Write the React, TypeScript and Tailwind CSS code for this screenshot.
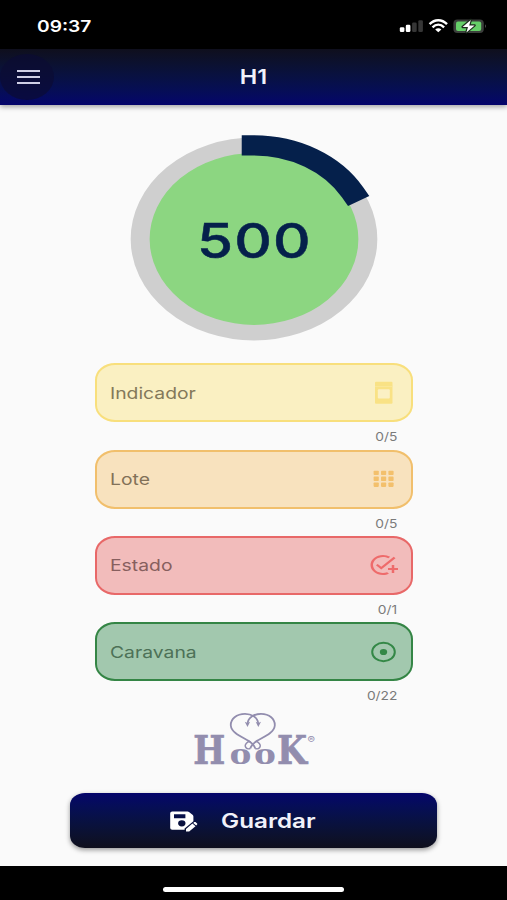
import type { ReactNode } from "react";
import { MdAddTask } from "react-icons/md";

const CardIcon = () => (
  <svg width="28" height="24" viewBox="0 0 28 24">
    <rect x="5" y="0.7" width="17.5" height="22" rx="1" fill="#f9e285" />
    <path d="M5 5.4h17.5" stroke="#fbe99f" strokeWidth="0.8" />
    <rect x="7.8" y="8.3" width="12" height="9.3" rx="1" fill="#fbf0c4" />
  </svg>
);

const GridIcon = () => (
  <svg width="28" height="24" viewBox="0 0 28 24" fill="#f3c06c">
    {[3.6, 11, 18.4].map(x =>
      [3.7, 9.6, 15.5].map(y => <rect key={`${x}-${y}`} x={x} y={y} width="5.2" height="4.4" rx="0.8" />)
    )}
  </svg>
);

const TaskIcon = () => <MdAddTask preserveAspectRatio="none" className="w-[30px] h-[24px] shrink-0 -ml-[1.5px] text-[#ee6b6b]" />;

const TargetIcon = () => (
  <svg width="28" height="24" viewBox="0 0 28 24">
    <ellipse cx="13.5" cy="12" rx="11.3" ry="9.2" fill="none" stroke="#348847" strokeWidth="2" />
    <ellipse cx="13.5" cy="12" rx="3.7" ry="3.1" fill="#348847" />
  </svg>
);

const SaveIcon = () => (
  <svg width="29" height="24" viewBox="0 0 29 24">
    <path fillRule="evenodd" fill="#fff" d="M3.2 2.4H18.6Q19.4 2.4 20 2.9L23.8 6.1Q24.4 6.7 24.4 7.5V12.2L15.6 19.4V20.7H3.2Q1.2 20.7 1.2 18.9V4.2Q1.2 2.4 3.2 2.4ZM5 5.2V9.2H16.4V5.2ZM12.8 11.2A3.7 3.1 0 1 0 12.8 17.4A3.7 3.1 0 1 0 12.8 11.2Z" />
    <path d="M17 22.6V19.9L23.4 14.6L26.5 17.2L20.2 22.6ZM24.2 14L25.3 13.1Q25.9 12.7 26.5 13.1L28.1 14.4Q28.6 14.9 28.1 15.5L27.2 16.4Z" fill="#fff" />
  </svg>
);

const FIELDS: { label: string; count: string; box: string; text: string; icon: ReactNode }[] = [
  { label: "Indicador", count: "0/5", box: "border-[#f8df7c] bg-[#faf0c2]", text: "text-[#83795a]", icon: <CardIcon /> },
  { label: "Lote", count: "0/5", box: "border-[#f1bf6c] bg-[#f8e2be]", text: "text-[#827158]", icon: <GridIcon /> },
  { label: "Estado", count: "0/1", box: "border-[#e86868] bg-[#f2bcbb]", text: "text-[#875f5e]", icon: <TaskIcon /> },
  { label: "Caravana", count: "0/22", box: "border-[#348545] bg-[#a2c8ae]", text: "text-[#4d7157]", icon: <TargetIcon /> },
];

function StatusBar() {
  return (
    <div className="h-[49px] bg-black flex items-start justify-between pl-[37px] pr-[21px] pt-[14px]">
      <span className="text-[16px] leading-6 font-semibold text-white origin-left scale-x-[1.2]">09:37</span>
      <svg width="88" height="24" viewBox="0 0 88 24">
        <rect x="1.8" y="13.2" width="4.6" height="4.8" rx="1.3" fill="#fff" />
        <rect x="7.8" y="10.8" width="4.6" height="7.2" rx="1.3" fill="#fff" />
        <rect x="14.1" y="8.4" width="4.6" height="9.6" rx="1.3" fill="#363636" />
        <rect x="20.3" y="6.2" width="4.6" height="11.8" rx="1.3" fill="#363636" />
        <g fill="none" stroke="#fff" strokeWidth="2.4">
          <path d="M31.6 10.2C36.7 4.9 43.9 4.9 49 10.2" />
          <path d="M34.5 13.3C38 9.9 42.6 9.9 46.1 13.3" />
        </g>
        <path d="M37.2 15.4C39 13.8 41.6 13.8 43.4 15.4L40.3 18.2Z" fill="#fff" />
        <rect x="55.4" y="5.4" width="30.4" height="13.6" rx="4" fill="#3c3f3c" />
        <rect x="58" y="7.4" width="25.2" height="9.6" rx="2" fill="#65cf68" />
        <path d="M87 10.2q1.8 1.9 0 3.8z" fill="#555" />
        <path d="M72.8 6L64.6 13h5.4l-1.6 5.4 8.2-7h-5.4z" fill="#fff" stroke="#1c2b1c" strokeWidth="2.4" strokeLinejoin="round" paintOrder="stroke" />
      </svg>
    </div>
  );
}

function Header() {
  return (
    <header className="h-[56px] grid grid-cols-[56px_1fr_56px] items-center bg-linear-to-b from-[#0f0f1d] to-[#05046b] shadow-[0_2px_5px_rgba(0,0,0,0.35)]">
      <button className="w-[54px] h-[46px] rounded-[50%] bg-[#0c0c33]/70 flex flex-col items-center justify-center gap-[4.3px] pl-[2px]">
        <i className="block w-[23px] h-[2px] bg-[#cfcfe6]" />
        <i className="block w-[23px] h-[2px] bg-[#cfcfe6]" />
        <i className="block w-[23px] h-[2px] bg-[#cfcfe6]" />
      </button>
      <h1 className="pt-[2px] text-center text-[19.5px] font-semibold text-[#f1f1fa] scale-x-[1.2]">H1</h1>
    </header>
  );
}

function Gauge() {
  return (
    <svg width="260" height="216" viewBox="-130 -108 260 216" className="mt-[26px] shrink-0">
      <g transform="scale(1.215 1)">
        <circle r="93.7" fill="#8cd681" stroke="#cfcfcf" strokeWidth="15.6" />
        <path d="M0 -93.7A93.7 93.7 0 0 1 81.1 -46.8" fill="none" stroke="#05204b" strokeWidth="20.2" strokeLinecap="square" />
        <text x="0.4" y="18.5" textAnchor="middle" fontSize="48" fontWeight="500" letterSpacing="1" fill="#05204b" stroke="#05204b" strokeWidth="0.5">500</text>
      </g>
    </svg>
  );
}

function Field({ label, count, box, text, icon }: (typeof FIELDS)[number]) {
  return (
    <div className="w-[318px] h-[86.3px] shrink-0">
      <div className={`h-[59px] rounded-[20px/17px] border-2 flex items-center justify-between pl-[13px] pr-[13px] ${box}`}>
        <span className={`text-[16.1px] origin-left scale-x-[1.2] ${text}`}>{label}</span>
        <span className="w-[28px] flex">{icon}</span>
      </div>
      <div className="pr-[15px] mt-[7px] flex justify-end text-[11.5px] leading-4 text-[#7a7a7a]">
        <span className="origin-right scale-x-[1.2]">{count}</span>
      </div>
    </div>
  );
}

function Logo() {
  return (
    <svg width="130" height="64" viewBox="-3 0 130 64" fill="#928dae" className="mt-[3px] shrink-0">
      <g fontWeight="700">
        <g fontFamily="DejaVu Serif, serif" fontSize="38.5" stroke="#928dae" strokeWidth="0.7">
          <text x="1.2" y="51.5" textLength="32" lengthAdjust="spacingAndGlyphs">H</text>
          <text x="85" y="51.5" textLength="30" lengthAdjust="spacingAndGlyphs">K</text>
        </g>
        <g fontFamily="Liberation Serif, serif" fontSize="31">
          <text x="37.3" y="51.8" textLength="22.5" lengthAdjust="spacingAndGlyphs">o</text>
          <text x="61.8" y="51.8" textLength="22.5" lengthAdjust="spacingAndGlyphs">o</text>
        </g>
      </g>
      <text x="115.5" y="31" fontSize="9" textLength="7.5" lengthAdjust="spacingAndGlyphs">®</text>
      <g fill="none" stroke="#928dae" strokeWidth="1.8">
        <path d="M66.3 12C66 5 59 1.8 53 1.8C44.5 1.8 38.5 7 38.8 13.5C39.3 20.5 49 24.5 56.5 28.8Q62.5 33 63.2 36.5" />
        <path d="M55.5 12C55.8 5 63 1.8 69 1.8C77.5 1.8 83.1 7 82.8 13.5C82.3 20.5 72.5 24.5 65 28.8Q59 33 58.3 36.5" />
        <path d="M58.3 36.5C54 38 52 34 54.2 31.5C55.5 30 57.5 29.2 58.6 30" strokeWidth="1.4" />
        <path d="M63.2 36.5C67.5 38 69.5 34 67.3 31.5C66 30 64 29.2 62.9 30" strokeWidth="1.4" />
      </g>
      <path d="M52.8 9.8l2.7 1.3 2.6-1.3-2.6 5.2zM69 9.8l-2.7 1.3-2.6-1.3 2.6 5.2z" />
    </svg>
  );
}

export default function App() {
  return (
    <div className="w-[507px] h-[900px] bg-[#fafafa] flex flex-col overflow-hidden font-[Inter,sans-serif]">
      <StatusBar />
      <Header />
      <main className="flex-1 min-h-0 flex flex-col items-center">
        <Gauge />
        <div className="mt-[16.4px] flex flex-col">
          {FIELDS.map(f => <Field key={f.label} {...f} />)}
        </div>
        <Logo />
        <button className="mt-[17.6px] w-[367px] h-[55px] shrink-0 rounded-[15px/12px] bg-linear-to-b from-[#05046b] to-[#0f0f1d] shadow-[0_2px_5px_rgba(0,0,0,0.4)] flex items-center pl-[99px] text-white">
          <SaveIcon />
          <span className="ml-[23px] pt-px text-[20.2px] font-semibold text-[#f1f1fa] origin-left scale-x-[1.2]">Guardar</span>
        </button>
      </main>
      <footer className="h-[34px] shrink-0 bg-black flex justify-center pt-[20.5px]">
        <div className="w-[181px] h-[5.5px] rounded-full bg-white" />
      </footer>
    </div>
  );
}
